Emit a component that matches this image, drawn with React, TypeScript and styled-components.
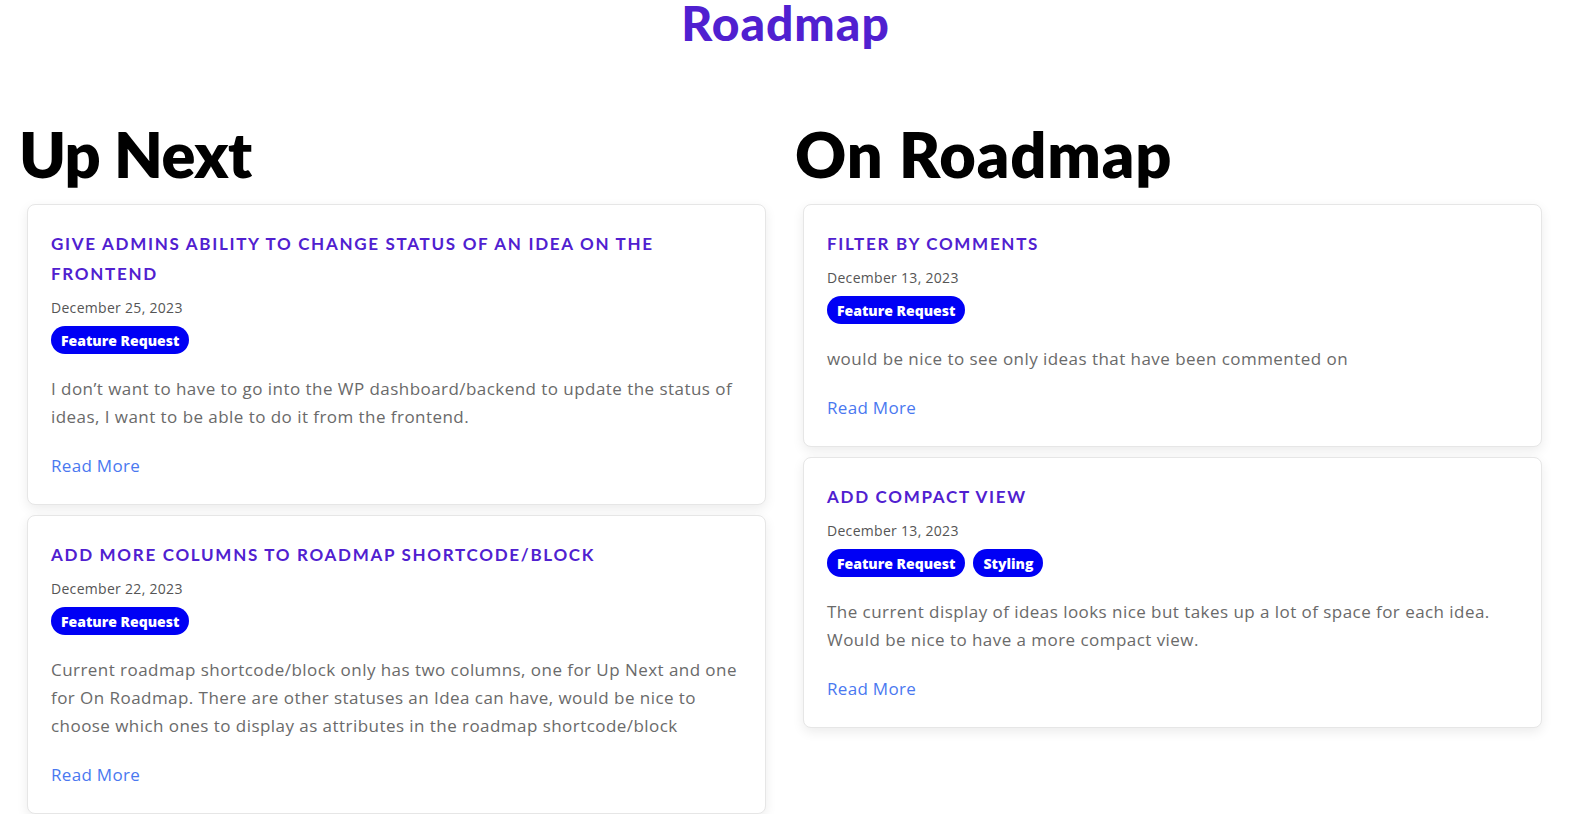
import React from "react";
import styled, { createGlobalStyle } from "styled-components";

const Global = createGlobalStyle`
  html, body { margin: 0; padding: 0; background: #ffffff; overflow: hidden; }
  * { box-sizing: border-box; }
`;

const Page = styled.div`
  width: 1571px;
  font-family: "Open Sans", "Liberation Sans", sans-serif;
`;

const PageTitle = styled.h1`
  margin: 0;
  text-align: center;
  font-family: Lato, "Liberation Sans", sans-serif;
  font-weight: 900;
  font-size: 48px;
  line-height: 46px;
  letter-spacing: 1px;
  color: #5020d0;
`;

const Columns = styled.div`
  display: grid;
  grid-template-columns: 755px 755px;
  column-gap: 21px;
  padding: 72px 21px 0 19px;
`;

const Column = styled.section`
  display: flex;
  flex-direction: column;
`;

const ColumnHeading = styled.h2<{ $spacing?: number }>`
  margin: 0 0 14px;
  font-family: Lato, "Liberation Sans", sans-serif;
  font-weight: 800;
  font-size: 63px;
  line-height: 72px;
  color: #000;
  letter-spacing: ${(p) => (p.$spacing ?? 0)}px;
`;

const CardList = styled.div`
  display: flex;
  flex-direction: column;
  gap: 10px;
  padding: 0 8px;
`;

const Card = styled.article`
  background: #fff;
  border: 1px solid #e6e6e6;
  border-radius: 8px;
  box-shadow: 0 4px 12px rgba(0, 0, 0, 0.08);
  padding: 24px 23px 24px;
  display: flex;
  flex-direction: column;
  align-items: flex-start;
`;

const CardTitle = styled.h3`
  margin: 0 0 9px;
  font-family: Lato, "Liberation Sans", sans-serif;
  font-weight: 700;
  font-size: 17px;
  line-height: 30px;
  letter-spacing: 1.7px;
  text-transform: uppercase;
  color: #5020d0;
`;

const DateText = styled.div`
  font-size: 14px;
  line-height: 20px;
  letter-spacing: 0.3px;
  color: #555;
  margin-bottom: 8px;
`;

const Tags = styled.div`
  display: flex;
  gap: 8px;
  margin-bottom: 21px;
`;

const Tag = styled.span`
  display: inline-flex;
  align-items: center;
  height: 28px;
  padding: 0 10px;
  border-radius: 14px;
  background: #0000f5;
  color: #fff;
  font-weight: 800;
  font-size: 14px;
  letter-spacing: 0px;
`;

const Description = styled.p`
  margin: 0 0 21px;
  font-size: 17px;
  line-height: 28px;
  letter-spacing: 0.45px;
  color: #6a6a6a;
`;

const ReadMore = styled.a`
  font-size: 17px;
  line-height: 28px;
  letter-spacing: 0.3px;
  color: #4a78f0;
  text-decoration: none;
`;

type Idea = { title: string; date: string; tags: string[]; body: string };

const upNext: Idea[] = [
  {
    title: "Give admins ability to change status of an idea on the frontend",
    date: "December 25, 2023",
    tags: ["Feature Request"],
    body: "I don’t want to have to go into the WP dashboard/backend to update the status of ideas, I want to be able to do it from the frontend.",
  },
  {
    title: "Add more columns to roadmap shortcode/block",
    date: "December 22, 2023",
    tags: ["Feature Request"],
    body: "Current roadmap shortcode/block only has two columns, one for Up Next and one for On Roadmap. There are other statuses an Idea can have, would be nice to choose which ones to display as attributes in the roadmap shortcode/block",
  },
];

const onRoadmap: Idea[] = [
  {
    title: "Filter by comments",
    date: "December 13, 2023",
    tags: ["Feature Request"],
    body: "would be nice to see only ideas that have been commented on",
  },
  {
    title: "Add compact view",
    date: "December 13, 2023",
    tags: ["Feature Request", "Styling"],
    body: "The current display of ideas looks nice but takes up a lot of space for each idea. Would be nice to have a more compact view.",
  },
];

const IdeaCard = ({ idea }: { idea: Idea }) => (
  <Card>
    <CardTitle>{idea.title}</CardTitle>
    <DateText>{idea.date}</DateText>
    <Tags>
      {idea.tags.map((t) => (
        <Tag key={t}>{t}</Tag>
      ))}
    </Tags>
    <Description>{idea.body}</Description>
    <ReadMore href="#">Read More</ReadMore>
  </Card>
);

export default function App() {
  return (
    <Page>
      <Global />
      <PageTitle>Roadmap</PageTitle>
      <Columns>
        <Column>
          <ColumnHeading $spacing={-0.6}>Up Next</ColumnHeading>
          <CardList>
            {upNext.map((i) => (
              <IdeaCard key={i.title} idea={i} />
            ))}
          </CardList>
        </Column>
        <Column>
          <ColumnHeading $spacing={0.9}>On Roadmap</ColumnHeading>
          <CardList>
            {onRoadmap.map((i) => (
              <IdeaCard key={i.title} idea={i} />
            ))}
          </CardList>
        </Column>
      </Columns>
    </Page>
  );
}
